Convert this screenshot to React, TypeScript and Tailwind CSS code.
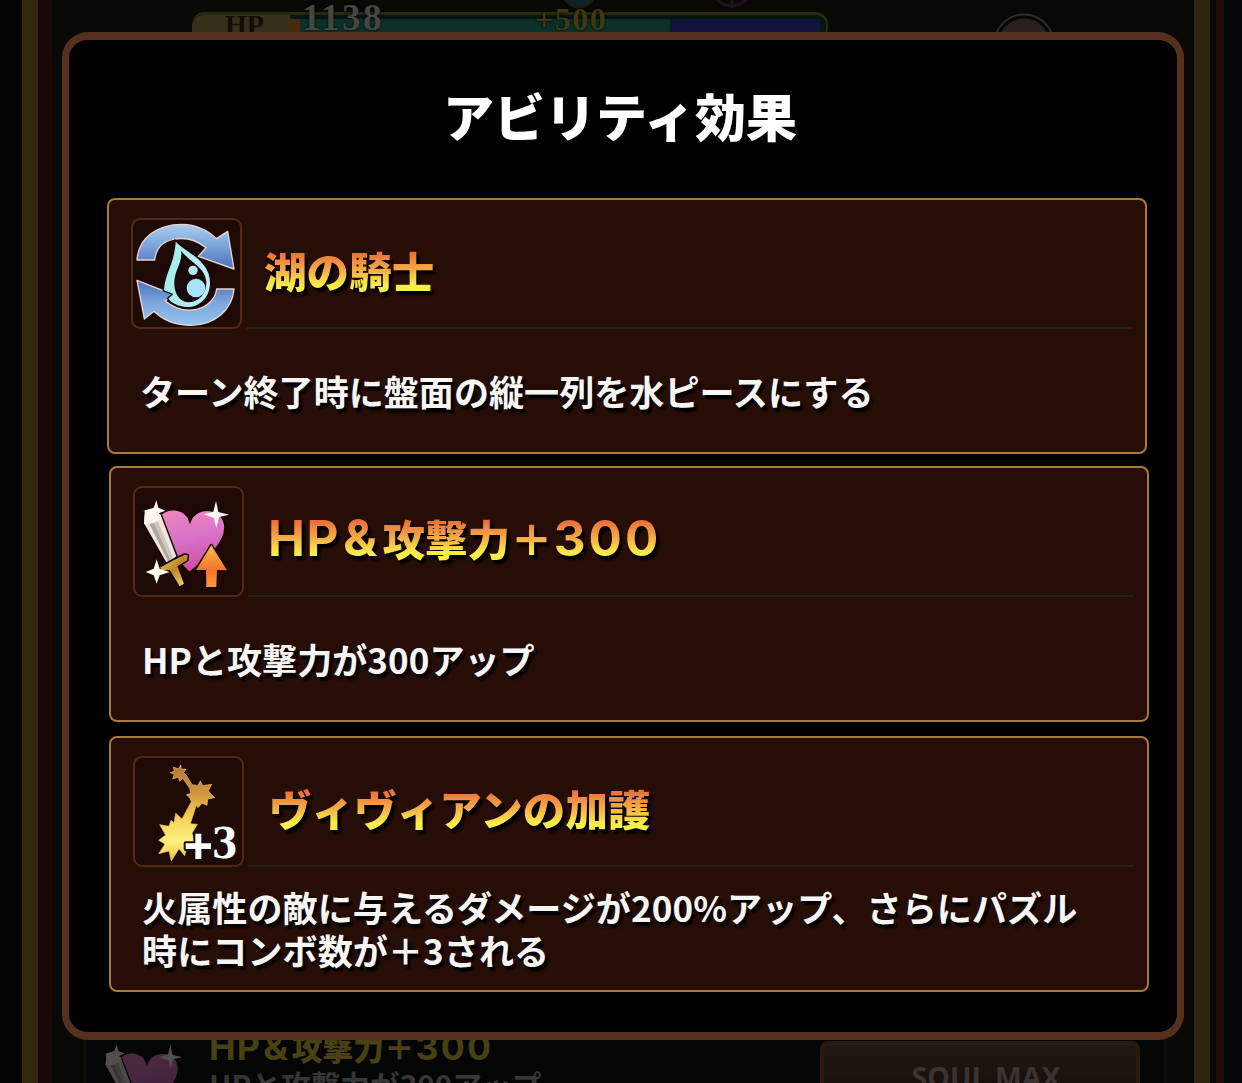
import type { ReactNode } from 'react'
import { clsx } from 'clsx'

const jp = "font-['Noto_Sans_CJK_JP',sans-serif]"

function IconFrame({ viewBox, children }: { viewBox: string; children: ReactNode }) {
  return (
    <div className="h-[111px] w-[111px] shrink-0 overflow-hidden rounded-[9px] border-2 border-[#55291a] bg-[#1e0904]">
      <svg viewBox={viewBox} className="-m-0.5 h-[111px] w-[111px]">
        {children}
      </svg>
    </div>
  )
}

function WaterCycleIcon() {
  return (
    <IconFrame viewBox="33 39 333 333">
      <defs>
        <linearGradient id="steelTop" x1="0" y1="0" x2="0" y2="1">
          <stop offset="0" stopColor="#a9cdf0" />
          <stop offset="0.5" stopColor="#7ba3da" />
          <stop offset="1" stopColor="#4a6fb8" />
        </linearGradient>
        <linearGradient id="steelBottom" x1="0" y1="0" x2="0" y2="1">
          <stop offset="0" stopColor="#4a70bb" />
          <stop offset="0.5" stopColor="#7da7de" />
          <stop offset="1" stopColor="#92c4ee" />
        </linearGradient>
        <linearGradient id="drop" x1="0" y1="0" x2="1" y2="0">
          <stop offset="0" stopColor="#9fefe6" />
          <stop offset="1" stopColor="#c3ecfb" />
        </linearGradient>
      </defs>
      <g stroke="#e9d5cf" strokeWidth="4" strokeLinejoin="round">
        <path
          fill="url(#steelTop)"
          d="M51 165 C55 98 112 58 186 58 C228 59 262 74 289 101 L323 79 L342 192 L235 154 L258 128 C229 105 194 96 160 103 C128 109 108 130 104 165 Z"
        />
        <path
          fill="url(#steelBottom)"
          d="M51 226 L159 268 L136 288 C165 312 196 320 230 313 C262 306 286 282 290 252 L342 252 C337 314 286 359 214 361 C169 361 130 347 102 319 L73 342 Z"
        />
      </g>
      <path
        fill="url(#drop)"
        stroke="#150a10"
        strokeWidth="8"
        paintOrder="stroke"
        fillRule="evenodd"
        d="M167 110 C197 143 270 165 270 233 C270 278 238 306 202 306 C174 305 151 291 145 281 L160 267 L132 256 C134 205 163 180 167 110 Z M183 137 C190 170 164 192 163 231 C162 266 178 290 204 292 C237 292 260 265 259 231 C257 188 212 174 183 137 Z"
      />
      <path d="M184 148 C188 176 168 200 167 231 C166 262 182 287 204 288 C234 288 255 263 255 231 C253 192 210 178 184 148 Z" fill="#180b0a" />
      <circle cx="219" cy="196" r="14" fill="#b8eafa" />
      <circle cx="228" cy="249" r="28" fill="#a7e3fb" />
    </IconFrame>
  )
}

function SwordHeart() {
  return (
    <>
      <defs>
        <linearGradient id="heart" x1="0" y1="0" x2="0.2" y2="1">
          <stop offset="0" stopColor="#f287bd" />
          <stop offset="0.5" stopColor="#d873c9" />
          <stop offset="1" stopColor="#d04fa3" />
        </linearGradient>
        <linearGradient id="upArrow" x1="0" y1="0" x2="0" y2="1">
          <stop offset="0" stopColor="#ffc04a" />
          <stop offset="0.6" stopColor="#f4702c" />
          <stop offset="1" stopColor="#fb9b3c" />
        </linearGradient>
        <linearGradient id="hilt" x1="0" y1="0" x2="1" y2="1">
          <stop offset="0" stopColor="#f6cc59" />
          <stop offset="0.5" stopColor="#c08428" />
          <stop offset="1" stopColor="#ffdf7c" />
        </linearGradient>
      </defs>
      <path
        fill="url(#heart)"
        stroke="#1a0505"
        strokeWidth="5"
        d="M210 140 C196 98 147 96 121 119 C113 166 145 232 208 293 C252 257 315 211 315 157 C314 96 229 88 210 140 Z"
      />
      <g stroke="#160707" strokeWidth="9" strokeLinejoin="round" paintOrder="stroke">
        <path fill="#efe6de" d="M75 107 L101 102 L122 120 L169 244 L142 267 L72 145 Z" />
        <path fill="#aea6a1" stroke="none" d="M88 146 L102 142 L152 256 L145 262 Z" />
        <path fill="#cfc6c0" stroke="none" d="M102 142 L112 136 L160 250 L152 256 Z" />
        <path fill="#fff8f0" stroke="none" d="M75 107 L101 102 L122 120 L124 130 L102 144 L72 146 Z" />
        <path fill="url(#hilt)" d="M120 278 Q150 260 194 239 L203 241 L201 256 L172 274 L192 326 L179 334 L149 284 L128 287 Z" />
        <path fill="url(#upArrow)" d="M274 211 L321 286 L291 285 L289 336 L259 336 L258 285 L228 285 Z" />
      </g>
      <g fill="#fffaf0">
        <path d="M109 76 L115 98 L136 107 L116 115 L107 137 L98 118 L70 108 L101 98 Z" />
        <path d="M288 78 L295 111 L327 119 L297 126 L289 159 L282 129 L251 118 L280 110 Z" />
        <path d="M110 253 L119 281 L149 291 L119 301 L110 326 L101 301 L77 291 L101 281 Z" />
      </g>
    </>
  )
}

function StarChainIcon() {
  return (
    <IconFrame viewBox="39 33 333 333">
      <defs>
        <linearGradient id="goldChain" x1="0" y1="0" x2="0" y2="1">
          <stop offset="0" stopColor="#b87535" />
          <stop offset="0.3" stopColor="#cf963d" />
          <stop offset="0.55" stopColor="#f3d35a" />
          <stop offset="0.8" stopColor="#fff17b" />
          <stop offset="1" stopColor="#e9be4d" />
        </linearGradient>
      </defs>
      <path
        fill="url(#goldChain)"
        stroke="#f0c36c"
        strokeWidth="2"
        strokeLinejoin="round"
        d="M182 60 L184 73 L198 72 L191 83 L199 91 L216 119 L233 122 L241 108 L248 122 L275 118 L265 138 L284 158 L263 162 L261 181 L246 175 L234 188 L229 181 L211 236 L232 238 L216 265 L226 290 L202 299 L194 332 L177 311 L154 348 L147 318 L116 326 L135 297 L116 286 L137 270 L119 239 L147 244 L153 226 L162 233 L167 205 L186 222 L214 170 L210 160 L199 149 L213 145 L209 130 L188 99 L179 109 L175 96 L158 102 L163 88 L151 83 L163 79 L160 66 L175 72 Z"
      />
      <g
        fill="#fff"
        stroke="#17100d"
        strokeWidth="12"
        strokeLinejoin="round"
        paintOrder="stroke"
        className="font-['DejaVu_Serif',serif] font-bold"
      >
        <path d="M226 266 H244 V295 H273 V312 H244 V342 H226 V312 H197 V295 H226 Z" />
        <text x="275" y="340" fontSize="126" textLength="78" lengthAdjust="spacingAndGlyphs">
          3
        </text>
      </g>
    </IconFrame>
  )
}

function AbilityName({ children }: { children: ReactNode }) {
  return (
    <h2
      className={clsx(
        jp,
        'flex h-[60px] items-baseline whitespace-nowrap bg-linear-to-b from-[#ea6a38] from-[20%] via-[#f3ac48] via-[50%] to-[#f7ee4a] to-[76%] bg-clip-text text-[42.6px] leading-[60px] font-black text-transparent drop-shadow-[3px_4px_1px_#000]',
      )}
    >
      {children}
    </h2>
  )
}

type AbilityCardProps = {
  icon: ReactNode
  name: ReactNode
  className?: string
  nameClass: string
  bodyClass: string
  children: ReactNode
}

function AbilityCard({ icon, name, className, nameClass, bodyClass, children }: AbilityCardProps) {
  return (
    <section
      className={clsx(
        'flex h-[256px] w-[1040px] flex-col rounded-lg border-2 border-[#a67a38] bg-[#260d06] pt-[18px] pl-[22px]',
        className,
      )}
    >
      <div className="flex h-[111px]">
        {icon}
        <div className={clsx('ml-1 h-[111px] w-[886px] border-b-2 border-[#1f2413]', nameClass)}>
          <AbilityName>{name}</AbilityName>
        </div>
      </div>
      <p
        className={clsx(
          jp,
          'pl-[9px] text-[35.1px] leading-[43px] font-bold whitespace-nowrap text-[#f8f6f5] [text-shadow:3px_4px_2px_#000]',
          bodyClass,
        )}
      >
        {children}
      </p>
    </section>
  )
}

function Backdrop() {
  return (
    <div className="flex h-full bg-[#040404]">
      <div className="w-[22px]" />
      <div className="w-4 bg-[#33270d]" />
      <div className="w-3.5 bg-[#190807]" />
      <div className="flex w-[1142px] flex-col justify-between bg-[#080902]">
        {/* HP gauge */}
        <div className="relative flex h-10 pt-3 pl-[140px]">
          <div className="flex h-7 w-[636px] rounded-xl border-t-[3px] border-r-2 border-[#292911] bg-[#061412] pt-1">
            <div className="-mt-1 h-7 w-[98px] rounded-l-xl bg-[#35301a] pl-[33px] font-['Liberation_Serif',serif] text-[28px] leading-5 font-bold text-[#160c05]">
              HP
            </div>
            <div className="h-5 w-2.5 bg-[#4b2a0b]" />
            <div className="h-5 w-[370px] bg-[#0b3128]" />
            <div className="h-5 w-[150px] bg-[#101439]" />
          </div>
          <span className="absolute top-0 left-[250px] font-['Liberation_Serif',serif] text-[37px] leading-[36px] font-bold tracking-[2.5px] text-[#454541] [text-shadow:0_0_3px_#000]">
            1138
          </span>
          <span className="absolute top-0.5 left-[483px] font-['Liberation_Serif',serif] text-[32px] leading-[35px] font-bold tracking-[1.5px] text-[#40380f] [text-shadow:0_0_3px_#000]">
            +500
          </span>
          <svg viewBox="0 0 630 40" className="absolute top-0 left-[500px] h-10 w-[630px]">
            <circle cx="27" cy="-9" r="16" fill="#0a2529" stroke="#24170e" strokeWidth="3" />
            <path d="M162 -3 Q180 15 197 -3 M180 -2 V8" fill="none" stroke="#251020" strokeWidth="3" />
            <circle cx="472" cy="44" r="29" fill="#28211c" stroke="#302b27" strokeWidth="3" />
            <circle cx="472" cy="44" r="27" fill="none" stroke="#080605" strokeWidth="3" />
          </svg>
        </div>
        {/* Ability row */}
        <div className="ml-[31px] flex h-[46px] w-[1084px] items-start overflow-hidden border-x-4 border-[#0c0d0d] bg-[#040505]">
          <svg viewBox="60 65 280 270" className="mt-1 ml-[15px] h-[81px] w-[84px] shrink-0 opacity-30">
            <SwordHeart />
          </svg>
          <div className={clsx(jp, '-mt-2 ml-[23px] w-[611px] whitespace-nowrap')}>
            <div className="flex h-9 items-baseline text-[30.8px] leading-[22px] font-black text-[#494013]">
              <AttackName />
            </div>
            <div className="mt-1 text-[29.7px] leading-8 font-bold text-[#363636]">HPと攻撃力が300アップ</div>
          </div>
          <div className="mt-1 h-20 w-[320px] shrink-0 rounded-t-lg border-4 border-[#2b190d] bg-linear-to-b from-[#211712] to-[#130b08] pt-4 pl-3 text-center font-['Open_Sans',sans-serif] text-[28.5px] leading-8 font-bold text-[#383433]">
            SOUL MAX
          </div>
        </div>
      </div>
      <div className="w-4 bg-[#2d260e]" />
      <div className="w-1.5 bg-[#0b0507]" />
      <div className="w-2 bg-[#220c08]" />
      <div className="w-[18px] bg-[#04040a]" />
    </div>
  )
}

function AttackName() {
  return (
    <>
      <span className="font-['Inter',sans-serif] text-[1.16em] leading-none font-bold tracking-[0.03em]">HP</span>
      <span className="mr-[0.1em] ml-[0.06em] font-['Inter',sans-serif] text-[1.2em] leading-none font-bold">&amp;</span>
      <span>攻撃力＋</span>
      <span className="ml-[0.02em] font-['Inter',sans-serif] text-[1.16em] leading-none font-bold tracking-[0.06em]">300</span>
    </>
  )
}

export default function App() {
  return (
    <main lang="ja" className="relative h-[1083px] w-[1242px] overflow-hidden bg-black">
      <Backdrop />
      <div className="absolute top-8 left-[62px] flex h-[1008px] w-[1122px] flex-col items-start rounded-[26px] border-x-[7px] border-y-8 border-[#55301f] bg-black pl-[38px]">
        <h1
          className={clsx(
            jp,
            'mt-[35px] w-full pl-[336px] text-[51px] leading-[80px] font-black whitespace-nowrap text-white',
          )}
        >
          アビリティ効果
        </h1>
        <AbilityCard
          className="mt-[43px]"
          icon={<WaterCycleIcon />}
          name="湖の騎士"
          nameClass="pt-[22px] pl-[18px]"
          bodyClass="mt-10"
        >
          ターン終了時に盤面の縦一列を水ピースにする
        </AbilityCard>
        <AbilityCard
          className="mt-3 ml-0.5"
          icon={
            <IconFrame viewBox="39 33 333 333">
              <SwordHeart />
            </IconFrame>
          }
          name={<AttackName />}
          nameClass="pt-[22px] pl-[20px]"
          bodyClass="mt-10"
        >
          HPと攻撃力が300アップ
        </AbilityCard>
        <AbilityCard
          className="mt-3.5 ml-0.5"
          icon={<StarChainIcon />}
          name="ヴィヴィアンの加護"
          nameClass="pt-[22px] pl-[21px]"
          bodyClass="mt-[18px] tracking-[0.05px]"
        >
          火属性の敵に与えるダメージが200%アップ、さらにパズル
          <br />
          時にコンボ数が＋3される
        </AbilityCard>
      </div>
    </main>
  )
}
